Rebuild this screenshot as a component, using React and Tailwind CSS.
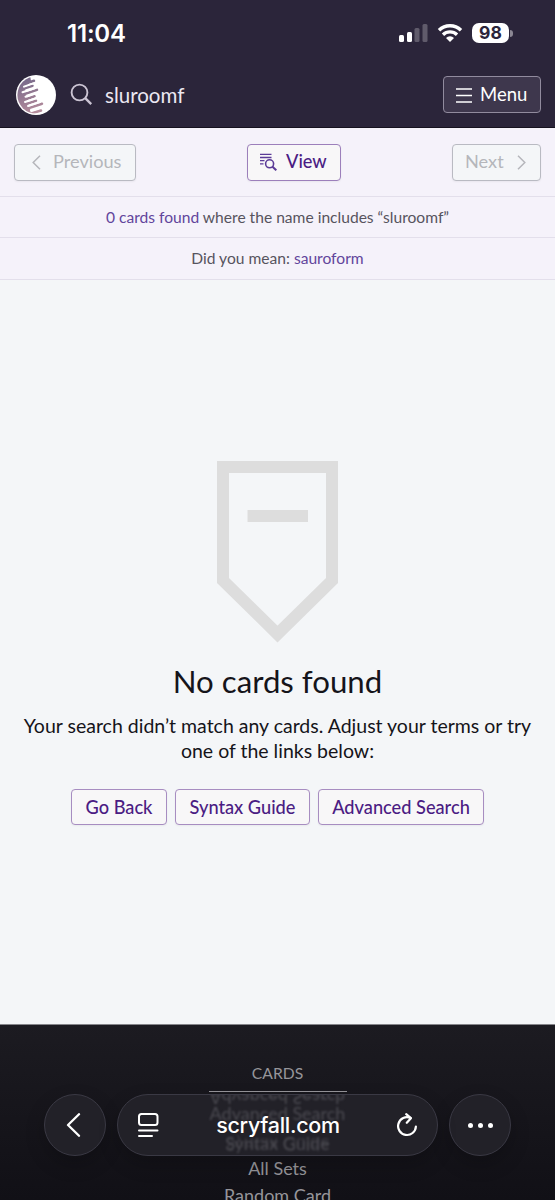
import React from "react";

const FOOTER_LINKS = ["Advanced Search", "Syntax Guide", "All Sets", "Random Card"];

const StatusBar = () => (
  <div className="flex h-[66px] items-center pl-[67px] pr-[42px] text-white">
    <span className="mt-[2px] font-[Inter,sans-serif] text-[24px] font-semibold tracking-[-0.2px]">
      11:04
    </span>
    <div className="ml-auto flex items-center">
      <svg width="29" height="18" viewBox="0 0 29 18" fill="#fff">
        <rect x="0" y="11" width="5" height="7" rx="1.5" />
        <rect x="8" y="8" width="5" height="10" rx="1.5" />
        <rect x="15.5" y="4" width="5" height="14" rx="1.5" opacity=".25" />
        <rect x="23.5" y="0" width="5" height="18" rx="1.5" opacity=".25" />
      </svg>
      <svg className="ml-[9px]" width="26" height="20" viewBox="0 0 26 20" fill="none" stroke="#fff">
        <path d="M2 7.3a15.8 15.8 0 0 1 22 0" strokeWidth="3.5" />
        <path d="M6 11.7a10 10 0 0 1 14 0" strokeWidth="3.3" />
        <path d="M13 19l-4-4a5.7 5.7 0 0 1 8 0z" fill="#fff" stroke="none" />
      </svg>
      <div className="ml-[9px] flex h-[20px] w-[37px] items-center justify-center rounded-[7px] bg-white font-[Inter,sans-serif] text-[17.500px] font-bold leading-none text-[#2b253a]">
        98
      </div>
      <div className="ml-[1px] h-[7px] w-[3px] rounded-r-full bg-[#8b8793]" />
    </div>
  </div>
);

const Logo = () => (
  <svg width="40" height="40" viewBox="0 0 40 40">
    <defs>
      <linearGradient id="planet" gradientUnits="userSpaceOnUse" x1="6" y1="4" x2="18" y2="38">
        <stop offset="0" stopColor="#76698a" />
        <stop offset="1" stopColor="#b58c9c" />
      </linearGradient>
      <clipPath id="disc">
        <circle cx="20" cy="20" r="18.6" />
      </clipPath>
    </defs>
    <circle cx="20" cy="20" r="20" fill="#fff" />
    <g clipPath="url(#disc)">
      <path d="M0 0h14l1 6-6 7 2 12 5 15H0z" fill="url(#planet)" />
      <g stroke="url(#planet)" strokeWidth="2.500" strokeLinecap="round">
        <path d="M9 8.800l9-3" />
        <path d="M8 13.500l8.500-2.800" />
        <path d="M7 19.500l14-4.600" />
        <path d="M9 24.500l9.500-3.200" />
        <path d="M13 33l13-4.300" />
        <path d="M16 38.300l9-2.800" />
        <path d="M10 29l10-3.300" />
      </g>
      <g stroke="#fff" strokeWidth="2" strokeLinecap="round">
        <path d="M8 11.600l11-3.700" />
        <path d="M6.500 17.200l12-4" />
        <path d="M9.500 21.800l11-3.700" />
        <path d="M9 27l11-3.700" />
        <path d="M12 31l12-4" />
        <path d="M15 35.800l12-4" />
      </g>
    </g>
  </svg>
);

const Header = () => (
  <header className="h-[128px] border-b border-[#16121f] bg-[#2b253a]">
    <StatusBar />
    <div className="flex h-[57px] items-center pl-4 pr-[14px]">
      <Logo />
      <svg className="ml-[14px]" width="23" height="23" viewBox="0 0 23 23" fill="none" stroke="#cbc4d3" strokeWidth="1.900">
        <circle cx="9.500" cy="9.500" r="7.900" />
        <path d="M15.200 15.200l6 6" strokeWidth="2.400" />
      </svg>
      <span className="mt-[1px] ml-[12px] text-[20.500px] text-[#ece8f2]">sluroomf</span>
      <button className="ml-auto flex h-[37px] w-[98px] items-center rounded-[4px] border border-[#918b9e] bg-[#3e374d] pl-[12px] pt-px text-[18.500px] text-white">
        <svg className="mr-[8px]" width="16" height="15" viewBox="0 0 16 15" stroke="#fff" strokeWidth="1.400">
          <path d="M0 1h16M0 7.500h16M0 14h16" />
        </svg>
        Menu
      </button>
    </div>
  </header>
);

const Controls = () => (
  <div className="flex h-[69px] items-center justify-between border-b border-[#e3dfeb] px-[14px] text-[18.200px]">
    <button className="flex h-[37px] w-[122px] items-center rounded-[4px] border border-[#b9bac2] bg-[#f4f6f8] pl-[17px] text-[#b5b6bb] shadow-xs">
      <svg className="mr-[12px]" width="9" height="15" viewBox="0 0 9 15" fill="none" stroke="currentColor" strokeWidth="1.500">
        <path d="M8 .7L1.200 7.500 8 14.300" />
      </svg>
      Previous
    </button>
    <button className="flex h-[37px] w-[94px] items-center rounded-[4px] border border-[#9c7fbb] bg-[#f8f7f8] pl-[12px] font-medium text-[#4b1c83] shadow-xs">
      <svg className="mr-[9px]" width="17" height="18" viewBox="0 0 17 18" fill="none" stroke="#5b3b97" strokeWidth="1.300">
        <path d="M0 1.300h11.500M0 4.500h11.500M0 7.700h4.500M0 10.800h3.500" />
        <circle cx="9.600" cy="10.800" r="4" strokeWidth="1.600" />
        <path d="M12.500 13.700l3.800 3.600" strokeWidth="2" />
      </svg>
      View
    </button>
    <button className="flex h-[37px] w-[89px] items-center rounded-[4px] border border-[#b9bac2] bg-[#f4f6f8] pl-[12px] text-[#b5b6bb] shadow-xs">
      Next
      <svg className="ml-[13px]" width="9" height="15" viewBox="0 0 9 15" fill="none" stroke="currentColor" strokeWidth="1.500">
        <path d="M1 .7l6.800 6.800L1 14.300" />
      </svg>
    </button>
  </div>
);

const LinkButton = ({ children, className }) => (
  <a
    className={
      "flex h-[36px] items-center justify-center rounded-[4px] border border-[#a78dc1] bg-[#f8f7f8] pt-[2px] text-[18.200px] font-medium text-[#4b1c83] shadow-xs " +
      className
    }
  >
    {children}
  </a>
);

const EmptyState = () => (
  <main className="flex h-[744px] flex-col items-center pt-[181px] text-[#15141a]">
    <svg width="121" height="182" viewBox="0 0 121 182">
      <path d="M6 6h109v113.500L60.500 173 6 119.500z" fill="none" stroke="#ddd" strokeWidth="12" />
      <path d="M30.500 49h60.500v12H30.500z" fill="#ddd" />
    </svg>
    <h1 className="mt-[17px] text-[31.200px] leading-[42px]">No cards found</h1>
    <p className="mt-[11px] text-center text-[19.500px] leading-[25px]">
      Your search didn’t match any cards. Adjust your terms or try
      <br />
      one of the links below:
    </p>
    <div className="mt-[26px] flex gap-[8px]">
      <LinkButton className="w-[96px]">Go Back</LinkButton>
      <LinkButton className="w-[135px]">Syntax Guide</LinkButton>
      <LinkButton className="w-[166px]">Advanced Search</LinkButton>
    </div>
  </main>
);

const glass =
  "flex h-[62px] items-center rounded-full border border-[#3a3944] bg-[#222128] text-white shadow-[0_8px_20px_rgba(0,0,0,0.2)]";

// floating browser controls, with the footer links refracted behind the address
const BrowserBar = () => (
  <div className="absolute left-[44px] top-[69px] flex gap-[11px]">
    <div className={glass + " w-[62px] justify-center"}>
      <svg className="mr-[4px]" width="15" height="24" viewBox="0 0 15 24" fill="none" stroke="#fff" strokeWidth="2.300" strokeLinecap="round" strokeLinejoin="round">
        <path d="M13 1.200L2 12l11 10.800" />
      </svg>
    </div>
    <div className={glass + " relative w-[321px] overflow-hidden pl-[20px] pr-[20px]"}>
      <div className="absolute inset-x-0 top-0 text-center text-[18px] leading-[27px] text-[#4b4a51] blur-[0.800px]">
        <div className="absolute inset-x-0 top-[-11px] -scale-y-100">Advanced Search</div>
        <div className="absolute inset-x-0 top-[5px]">{FOOTER_LINKS[0]}</div>
        <div className="absolute inset-x-0 top-[35px]">{FOOTER_LINKS[1]}</div>
        <div className="absolute inset-x-0 top-[36px] -scale-y-100 opacity-60">Syntax Guide</div>
      </div>
      <svg className="relative" width="21" height="24" viewBox="0 0 21 24" fill="none" stroke="#fff" strokeWidth="2" strokeLinecap="round">
        <rect x="1" y="1" width="18.500" height="11" rx="2.500" />
        <path d="M1 17.500h18.500M1 23h13" />
      </svg>
      <span className="relative flex-1 text-center font-[Inter,sans-serif] text-[21.500px] font-medium tracking-[-0.3px]">
        scryfall.com
      </span>
      <svg className="relative" width="20" height="24" viewBox="0 0 20 24" fill="none" stroke="#fff" strokeWidth="2.200" strokeLinecap="round" strokeLinejoin="round">
        <path d="M13.500 4.900A8.900 8.900 0 1 0 18.900 13.500" />
        <path d="M9.200 1.200l4.700 4-4.100 4.600" />
      </svg>
    </div>
    <div className={glass + " w-[62px] justify-center gap-[5px]"}>
      <i className="size-[5px] rounded-full bg-white" />
      <i className="size-[5px] rounded-full bg-white" />
      <i className="size-[5px] rounded-full bg-white" />
    </div>
  </div>
);

const Footer = () => (
  <footer className="relative h-[176px] overflow-hidden border-t border-[#85858a] bg-gradient-to-b from-[#1c1b21] to-[#111016] text-center text-[#96959a]">
    <div className="mx-auto h-[67px] w-[138px] border-b border-[#96959a] pt-[36px] text-[15.700px] leading-[24px]">
      CARDS
    </div>
    <ul className="mt-[9px] text-[18px] leading-[27px]">
      {FOOTER_LINKS.map((link, i) => (
        <li key={link} className={i < 2 ? "invisible" : ""}>
          {link}
        </li>
      ))}
    </ul>
    <BrowserBar />
  </footer>
);

const App = () => {
  return (
    <div className="h-[1200px] w-[555px] overflow-hidden bg-[#f4f6f8] font-[Lato,sans-serif]">
      <Header />
      <div className="bg-[#f5f2fa] text-[#57545e]">
        <Controls />
        <p className="h-[41px] border-b border-[#e3dfeb] text-center text-[15.600px] leading-[41px]">
          <span className="text-[#62459c]">0 cards found</span> where the name includes “sluroomf”
        </p>
        <p className="h-[42px] border-b border-[#e3dfeb] text-center text-[15.600px] leading-[41px]">
          Did you mean: <a className="text-[#62459c]">sauroform</a>
        </p>
      </div>
      <EmptyState />
      <Footer />
    </div>
  );
};

export default App;
